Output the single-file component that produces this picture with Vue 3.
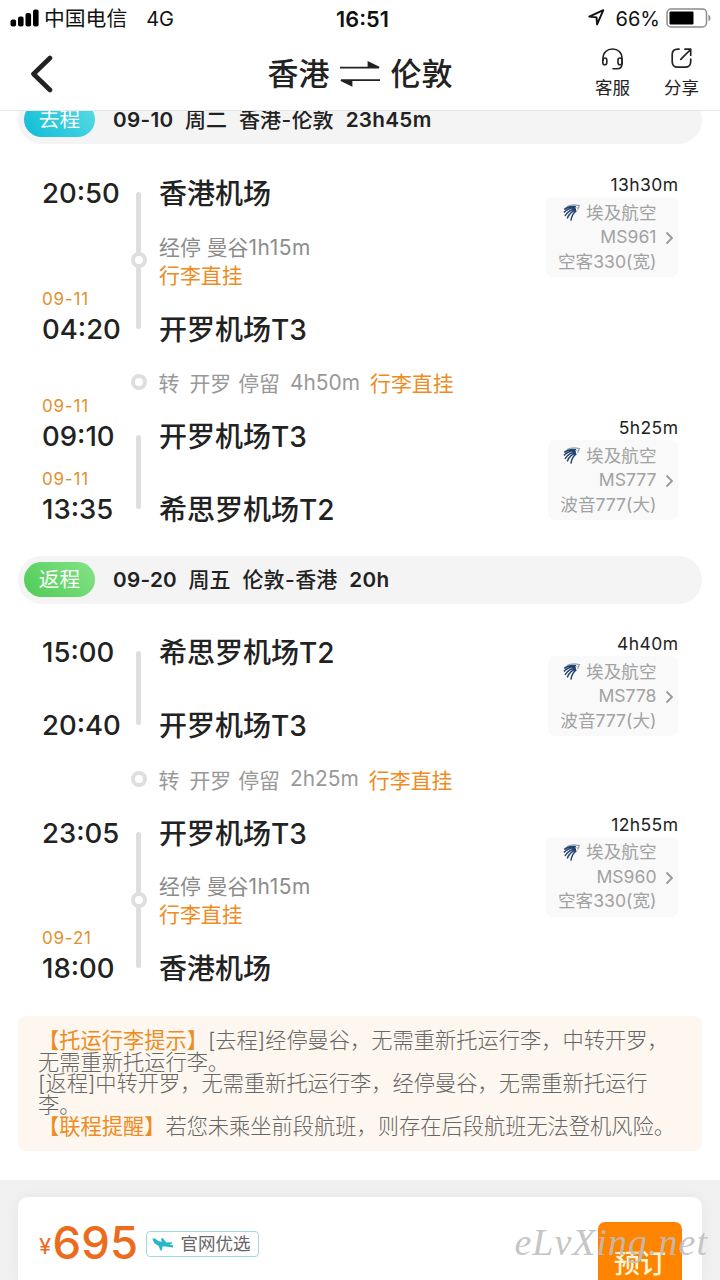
<script setup>
const outbound = [
  {
    from: { time: '20:50', name: '香港机场' },
    to: { date: '09-11', time: '04:20', name: '开罗机场', terminal: 'T3' },
    stop: '1h15m', duration: '13h30m', flight: 'MS961', plane: ['空客', '330', '宽'],
  },
  { transfer: '4h50m' },
  {
    from: { date: '09-11', time: '09:10', name: '开罗机场', terminal: 'T3' },
    to: { date: '09-11', time: '13:35', name: '希思罗机场', terminal: 'T2' },
    duration: '5h25m', flight: 'MS777', plane: ['波音', '777', '大'],
  },
]
const inbound = [
  {
    from: { time: '15:00', name: '希思罗机场', terminal: 'T2' },
    to: { time: '20:40', name: '开罗机场', terminal: 'T3' },
    duration: '4h40m', flight: 'MS778', plane: ['波音', '777', '大'],
  },
  { transfer: '2h25m' },
  {
    from: { time: '23:05', name: '开罗机场', terminal: 'T3' },
    to: { date: '09-21', time: '18:00', name: '香港机场' },
    stop: '1h15m', duration: '12h55m', flight: 'MS960', plane: ['空客', '330', '宽'],
  },
]
const trips = [
  { kind: 'outbound', tag: '去程', date: '09-10', day: '周二', route: ['香港', '伦敦'], total: '23h45m', items: outbound },
  { kind: 'inbound', tag: '返程', date: '09-20', day: '周五', route: ['伦敦', '香港'], total: '20h', items: inbound },
]
</script>

<template>
  <div class="screen">
    <header class="top">
      <div class="status">
        <div class="st-left">
          <svg width="29" height="18" viewBox="0 0 29 18">
            <rect x="0.5" y="10.5" width="5.6" height="7" rx="2" />
            <rect x="8" y="7.5" width="5.6" height="10" rx="2" />
            <rect x="15.5" y="4" width="5.6" height="13.5" rx="2" />
            <rect x="23" y="0.5" width="5.6" height="17" rx="2" />
          </svg>
          <span class="carrier">中国电信</span><span class="net">4G</span>
        </div>
        <div class="clock">16:51</div>
        <div class="st-right">
          <svg width="17" height="17" viewBox="0 0 17 17"><path d="M1.3 7.6 15.3 1.2 9.1 15.4 8.5 8.4Z" fill="none" stroke="#111" stroke-width="1.9" stroke-linejoin="round" /></svg>
          <span class="pct">66%</span>
          <svg width="45" height="20" viewBox="0 0 45 20">
            <rect x="1" y="1" width="39.5" height="18" rx="4" fill="none" stroke="#8c8c8c" stroke-width="1.5" />
            <rect x="3.5" y="3.5" width="24" height="13" rx="1" />
            <path d="M42.500 6.500q2 1.200 2 3.500t-2 3.500z" fill="#8c8c8c" />
          </svg>
        </div>
      </div>
      <div class="nav">
        <svg class="back" width="24" height="38" viewBox="0 0 24 38"><path d="M20 3 3.500 19 20 35" fill="none" stroke="#222" stroke-width="4.6" stroke-linecap="round" stroke-linejoin="round" /></svg>
        <h1 class="title">
          <span>香港</span>
          <svg width="40" height="26" viewBox="0 0 40 26"><path d="M0 6.600H39L28.500 1.500V6.600M40 19.200H1L11.500 24.300V19.200" fill="#222" stroke="#222" stroke-width="1.8" /></svg>
          <span>伦敦</span>
        </h1>
        <div class="actions">
          <div class="action">
            <svg width="26" height="24" viewBox="0 0 26 24" fill="none" stroke="#222" stroke-width="1.6" stroke-linecap="round">
              <path d="M3 13.500V11.500C3 5.600 7 2 12.500 2s9.500 3.600 9.500 9.500V17c0 3-2 4.700-5 4.700H13" />
              <rect x="2.800" y="11" width="4" height="6.800" rx="2" />
              <rect x="18" y="11" width="4" height="6.800" rx="2" />
            </svg>
            <span>客服</span>
          </div>
          <div class="action">
            <svg width="26" height="24" viewBox="0 0 26 24" fill="none" stroke="#222" stroke-width="1.7" stroke-linecap="round" stroke-linejoin="round">
              <path d="M10 2.200H9C5 2.200 3.200 4.200 3.200 7.500v7c0 3.700 2 5.700 5.500 5.700h7.500c3.700 0 5.500-2 5.500-5.700V12M16 2.200h5.700v6M21.500 2.500 11.800 12.300" />
            </svg>
            <span>分享</span>
          </div>
        </div>
      </div>
    </header>

    <main class="trips">
      <section v-for="t in trips" :key="t.kind" class="trip" :class="t.kind">
        <div class="bar">
          <span class="tag">{{ t.tag }}</span>
          <span class="bar-date">{{ t.date }}</span>
          <span class="bar-day">{{ t.day }}</span>
          <span class="bar-route">{{ t.route[0] }}<i>-</i>{{ t.route[1] }}</span>
          <span class="bar-total">{{ t.total }}</span>
        </div>
        <template v-for="(s, i) in t.items" :key="i">
          <div v-if="s.transfer" class="transfer">
            <span class="dot"></span>
            <span class="tr-a">转</span><span class="tr-b">开罗</span><span class="tr-c">停留</span>
            <span class="tr-d">{{ s.transfer }}</span><span class="through">行李直挂</span>
          </div>
          <div v-else class="segment" :class="{ long: s.stop }">
            <div class="times">
              <div class="when"><span v-if="s.from.date" class="date">{{ s.from.date }}</span><span class="time">{{ s.from.time }}</span></div>
              <div class="when"><span v-if="s.to.date" class="date">{{ s.to.date }}</span><span class="time">{{ s.to.time }}</span></div>
            </div>
            <div class="track"><span v-if="s.stop" class="dot"></span></div>
            <div class="places">
              <div class="place">{{ s.from.name }}<b>{{ s.from.terminal }}</b></div>
              <div v-if="s.stop" class="stop">
                <div>经停 曼谷<b>{{ s.stop }}</b></div>
                <div class="through">行李直挂</div>
              </div>
              <div class="place">{{ s.to.name }}<b>{{ s.to.terminal }}</b></div>
            </div>
            <div class="side">
              <div class="duration">{{ s.duration }}</div>
              <div class="card">
                <div class="info">
                  <div class="airline">
                    <svg width="17" height="18" viewBox="0 0 17 18" fill="none">
                      <path d="M4 2.500C7.500 .8 12 .6 16.200 1.600L15.200 5.200" stroke="#8fa3b5" stroke-width="1.300" />
                      <path d="M13 2.700C8 1.900 4.200 2.900 1.200 5.300M12.800 3.900C8 3.500 4 5.200 .9 8.600M12.800 5C8.500 5.200 4.800 7.500 1.900 11.800M13 6C9.500 6.800 6.300 9.500 4.200 14.400M13.400 6.900C10.700 8.500 8.600 11.700 7.900 16.700" stroke="#24446e" stroke-width="1.500" />
                      <path d="M12.500 3.500l2.600.3-.8 2.600" stroke="#b9c6d2" stroke-width="1" />
                    </svg>
                    <span>埃及航空</span>
                  </div>
                  <div class="flight">{{ s.flight }}</div>
                  <div class="plane">{{ s.plane[0] }}<b>{{ s.plane[1] }}(</b>{{ s.plane[2] }}<b>)</b></div>
                </div>
                <svg class="more" width="9" height="14" viewBox="0 0 9 14"><path d="M1.500 1.500 7 7 1.500 12.500" fill="none" stroke="#999" stroke-width="1.800" /></svg>
              </div>
            </div>
          </div>
        </template>
      </section>
    </main>

    <div class="notice">
      <div><em>【托运行李提示】</em><i>[</i>去程<i>]</i>经停曼谷，无需重新托运行李，中转开罗，</div>
      <div>无需重新托运行李。</div>
      <div><i>[</i>返程<i>]</i>中转开罗，无需重新托运行李，经停曼谷，无需重新托运行</div>
      <div>李。</div>
      <div><em>【联程提醒】</em>若您未乘坐前段航班，则存在后段航班无法登机风险。</div>
    </div>

    <footer class="footer">
      <div class="offer">
        <span class="yen">¥</span><span class="price">695</span>
        <span class="badge">
          <svg width="22" height="14" viewBox="0 0 22 14"><path d="M.3 1.600 3 1.400 6.200 3.900 9.800 4.700 9 1.200 10.800 1.200 14.300 5.600 19.500 5.200 20.300 6.400 17.500 7.400 21.300 8.600 20.800 10.600 14 9.600 10.500 9.600 10 13.400 8.300 13.200 6.700 8.900 2.400 6.300Z" fill="#27b7cb" /></svg>
          官网优选
        </span>
        <button class="book">预订</button>
      </div>
      <span class="watermark">eLvXing.net</span>
    </footer>
  </div>
</template>

<style>
body { background: #fff; overflow: hidden; }
</style>

<style scoped>
.screen {
  width: 720px; height: 1280px; overflow: hidden; background: #fff; color: #222;
  font-family: Inter, "Noto Sans CJK SC", sans-serif;
  display: flex; flex-direction: column; white-space: nowrap;
}
.screen * { box-sizing: border-box; }
i, em, b { font-style: normal; font-weight: inherit; }
svg { display: block; flex: none; }
.top { flex: none; height: 111px; background: #fff; border-bottom: 1px solid #e6e6e6; position: relative; z-index: 2; }
.status { height: 37px; display: grid; grid-template-columns: 1fr auto 1fr; align-items: center; padding: 0 9px 0 10px; color: #111; font-size: 20px; line-height: 36px; }
.st-left, .st-right { display: flex; align-items: center; }
.st-left svg { margin-bottom: 1px; }
.carrier { font-size: 20.800px; margin-left: 5px; }
.net { margin-left: 19px; }
.clock { font-weight: 600; font-size: 21.700px; padding-left: 4px; }
.st-right { justify-content: flex-end; }
.st-right svg { margin-bottom: 2px; }
.pct { margin: 0 6px 0 11px; font-size: 20px; }
.nav { height: 73px; display: grid; grid-template-columns: 200px 1fr 200px; align-items: center; }
.back { margin-left: 30px; }
.title { margin: 0; display: flex; justify-content: center; align-items: center; gap: 10.500px; font-size: 31px; font-weight: 500; line-height: 40px; }
.actions { display: flex; justify-content: flex-end; gap: 34px; padding-right: 21px; margin-top: -1px; }
.action { display: flex; flex-direction: column; align-items: center; font-size: 17.500px; line-height: 24px; gap: 5px; }

.trips { flex: none; margin-top: -15.500px; }
.bar { height: 48px; margin: 0 18px 28.500px; border-radius: 24px; background: #f4f4f4; display: flex; align-items: center; padding-left: 6px; font-size: 21px; font-weight: 500; line-height: 50px; }
.outbound .bar { margin-bottom: 29.500px; }
.outbound { padding-bottom: 26.500px; }
.tag { width: 71px; height: 35px; line-height: 36px; font-size: 20.700px; border-radius: 18px; text-align: center; color: #fff; font-weight: 400; margin-right: 18px; }
.outbound .tag { background: linear-gradient(45deg, #0cbcd6, #5cdce4); }
.inbound .tag { background: linear-gradient(45deg, #4ecb55, #86e388); }
.bar-date, .bar-total { font-weight: 600; font-size: 20.700px; letter-spacing: .3px; }
.bar-date, .bar-day, .bar-route { margin-right: 12px; }
.bar-date { margin-right: 11.500px; }
.bar-route i { margin: 0 .5px; }

.segment { height: 113px; display: flex; padding: 0 42px; }
.segment.long { height: 175.500px; }
.times { width: 94px; display: flex; flex-direction: column; justify-content: space-between; }
.when { height: 40px; display: flex; flex-direction: column; justify-content: flex-end; }
.date { font-size: 17px; line-height: 20px; color: #e0912f; letter-spacing: .8px; }
.time { font-size: 27.500px; line-height: 40px; font-weight: 500; }
.track { width: 5px; margin: 19px 0 20px; border-radius: 3px; background: #dedede; display: flex; align-items: center; justify-content: center; }
.dot { flex: none; width: 16px; height: 16px; border: 4px solid #dedede; border-radius: 50%; background: #fff; }
.places { margin-left: 18px; flex: 1; display: flex; flex-direction: column; justify-content: space-between; }
.place { font-size: 28px; line-height: 42px; height: 40px; font-weight: 500; }
.stop { font-size: 20.900px; line-height: 28px; color: #8c8c8c; height: 56px; margin-top: 2px; }
.stop b { letter-spacing: .6px; }
.through { color: #ee8b22; }
.side { display: flex; flex-direction: column; align-items: flex-end; }
.duration { font-size: 17.500px; line-height: 24px; letter-spacing: .4px; margin-right: -.4px; }
.card { height: 80px; border-radius: 7px; background: #f9f9f9; color: #a2a2a2; display: flex; align-items: center; padding: 1px 4px 0 12px; gap: 8.500px; }
.info { font-size: 17.600px; line-height: 24.500px; text-align: right; }
.airline { display: flex; justify-content: flex-end; align-items: center; gap: 6px; }
.flight { position: relative; }
.more { margin-top: 1px; }

.transfer { height: 67.500px; display: flex; align-items: center; padding-left: 130.500px; font-size: 20.900px; color: #999; }
.transfer .dot { border-width: 4.500px; margin-right: 12px; }
.tr-a, .tr-c { margin-right: 10px; }
.tr-b { margin-right: 7px; }
.tr-d { margin-right: 10px; }

.notice { flex: none; margin: 28px 18px 29px; height: 135px; border-radius: 8px; background: #fef7f0; padding: 14px 20px; font-size: 21.240px; line-height: 21.600px; font-weight: 300; color: #666; }
.notice em { color: #ee8b22; font-weight: 400; }

.footer { flex: 1; background: #f0f0f0; padding: 17px 18px 0; position: relative; }
.offer { height: 90px; border-radius: 10px; background: #fff; box-shadow: 0 0 14px rgba(0, 0, 0, .04); padding: 25px 20px 0 21px; display: flex; align-items: flex-start; color: #ea6c1c; }
.yen { font-size: 22px; line-height: 48px; margin-right: 1.500px; }
.price { font-size: 45.500px; line-height: 42px; font-weight: 500; }
.badge { margin: 9px 0 0 7.500px; width: 113px; height: 26px; border: 1px solid #9fd9e6; border-radius: 4px; display: flex; align-items: center; gap: 7px; padding-left: 5px; font-size: 17.500px; line-height: 24px; color: #666; }
.book { margin: 0 0 0 auto; width: 84px; height: 78px; border: 0; border-radius: 7px; background: #ff8400; color: #fff8dd; font: 500 26px "Noto Sans CJK SC", sans-serif; padding: 0; }
.watermark { position: absolute; right: 12px; top: 40px; font: italic 38px/44px "Liberation Serif", serif; letter-spacing: 1px; color: rgba(190, 190, 190, .9); }
</style>
